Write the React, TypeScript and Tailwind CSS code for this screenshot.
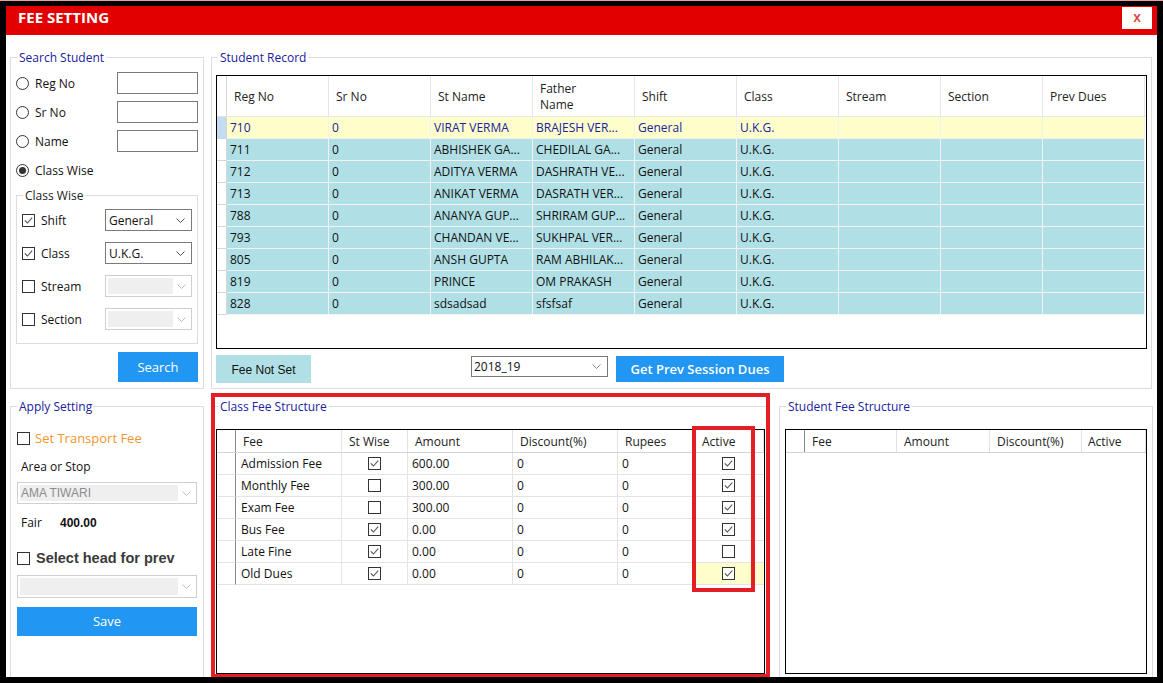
import React from 'react';

const navy = 'text-[#2020a0]';

function Check({ on }: { on?: boolean }) {
  return (
    <span className="inline-flex w-[13px] h-[13px] shrink-0 border border-[#333] bg-white items-center justify-center">
      {on && (
        <svg width="11" height="11" viewBox="0 0 11 11">
          <path d="M1.8 5.4 L4.4 8 L9.2 2.6" fill="none" stroke="#555" strokeWidth="1.1" />
        </svg>
      )}
    </span>
  );
}

function Radio({ on }: { on?: boolean }) {
  return (
    <span className="inline-flex w-[13px] h-[13px] shrink-0 rounded-full border border-[#333] bg-white items-center justify-center">
      {on && <span className="w-[7px] h-[7px] rounded-full bg-[#333]" />}
    </span>
  );
}

function Chevron({ color = '#555' }: { color?: string }) {
  return (
    <svg width="9" height="5" viewBox="0 0 9 5" className="shrink-0">
      <path d="M0.5 0.5 L4.5 4.5 L8.5 0.5" fill="none" stroke={color} />
    </svg>
  );
}

function Combo({ value, className = '' }: { value: string; className?: string }) {
  return (
    <div className={`flex items-center justify-between border border-[#7a7a7a] bg-white pl-[3px] pr-[6px] text-[12px] text-[#111] ${className}`}>
      <span className="pt-[1px]">{value}</span>
      <Chevron />
    </div>
  );
}

function DisabledCombo({ value = '', className = '' }: { value?: string; className?: string }) {
  return (
    <div className={`flex items-stretch border border-[#cfcfcf] bg-white p-[2px] ${className}`}>
      <div className="flex-1 bg-[#efefef] flex items-center pl-[1px] text-[12px] text-[#8c8c8c] font-['Liberation_Sans',Arial,sans-serif]">
        {value}
      </div>
      <div className="w-[16px] flex items-center justify-center">
        <Chevron color="#bdbdbd" />
      </div>
    </div>
  );
}

// group box: the fieldset has no padding so the legend always sits 8px in
function Group({
  title,
  className = '',
  bodyClass = '',
  titleClass = navy,
  children,
}: {
  title: string;
  className?: string;
  bodyClass?: string;
  titleClass?: string;
  children?: React.ReactNode;
}) {
  return (
    <fieldset className={`border border-[#dcdcdc] min-w-0 ${className}`}>
      <legend className={`ml-[6px] px-[2px] text-[12px] leading-[16px] pt-[1px] ${titleClass}`}>{title}</legend>
      <div className={`flex flex-col ${bodyClass}`}>{children}</div>
    </fieldset>
  );
}

const students = [
  ['710', '0', 'VIRAT VERMA', 'BRAJESH VER...'],
  ['711', '0', 'ABHISHEK GA...', 'CHEDILAL GA...'],
  ['712', '0', 'ADITYA VERMA', 'DASHRATH VE...'],
  ['713', '0', 'ANIKAT VERMA', 'DASRATH VER...'],
  ['788', '0', 'ANANYA GUP...', 'SHRIRAM GUP...'],
  ['793', '0', 'CHANDAN VE...', 'SUKHPAL VER...'],
  ['805', '0', 'ANSH GUPTA', 'RAM ABHILAK...'],
  ['819', '0', 'PRINCE', 'OM PRAKASH'],
  ['828', '0', 'sdsadsad', 'sfsfsaf'],
];

const recordCols = ['Reg No', 'Sr No', 'St Name', 'Father\nName', 'Shift', 'Class', 'Stream', 'Section', 'Prev Dues'];

function StudentTable() {
  return (
    <div className="w-[931px] h-[274px] border border-black bg-white mt-[9px] overflow-hidden">
      <div className="flex h-[41px] border-b border-[#e6e6e6]">
        <div className="w-[10px] border-r border-[#d6d6d6]" />
        {recordCols.map((c) => (
          <div
            key={c}
            className="w-[102px] border-r border-[#e6e6e6] flex items-center pl-[7px] pt-[2px] text-[12px] leading-[16px] text-[#222] whitespace-pre-line"
          >
            {c}
          </div>
        ))}
      </div>
      {students.map((r, i) => {
        const sel = i === 0;
        const cells = [...r, 'General', 'U.K.G.', '', '', ''];
        return (
          <div key={r[0]} className="flex h-[22px]">
            <div
              className={`w-[10px] border-r border-b border-[#d6d6d6] ${sel ? 'bg-[#c4dcf2]' : 'bg-white'}`}
            />
            {cells.map((c, j) => (
              <div
                key={j}
                className={`w-[102px] border-r border-b border-[#f2f2f2] flex items-center pl-[3px] pt-[1px] text-[12px] whitespace-nowrap overflow-hidden ${
                  sel ? 'bg-[#ffffcc] text-[#2020a0]' : 'bg-[#b0e0e6] text-[#111]'
                }`}
              >
                {c}
              </div>
            ))}
          </div>
        );
      })}
    </div>
  );
}

const feeRows: [string, boolean, string, string, string, boolean][] = [
  ['Admission Fee', true, '600.00', '0', '0', true],
  ['Monthly Fee', false, '300.00', '0', '0', true],
  ['Exam Fee', false, '300.00', '0', '0', true],
  ['Bus Fee', true, '0.00', '0', '0', true],
  ['Late Fine', true, '0.00', '0', '0', false],
  ['Old Dues', true, '0.00', '0', '0', true],
];

function HeaderCell({ w, label, pl = 'pl-[7px]' }: { w: string; label: string; pl?: string }) {
  return (
    <div className={`${w} border-r border-[#e2e2e2] flex items-center ${pl} pt-[1px] text-[12px] text-[#222] whitespace-nowrap`}>
      {label}
    </div>
  );
}

function ClassFeeTable() {
  return (
    <div className="w-[549px] h-[245px] border border-black bg-white mt-[14px] overflow-hidden">
      <div className="flex h-[23px] border-b border-[#d4d4d4]">
        <div className="w-[19px] border-r border-[#8a8a8a]" />
        <HeaderCell w="w-[106px]" label="Fee" />
        <HeaderCell w="w-[66px]" label="St Wise" />
        <HeaderCell w="w-[105px]" label="Amount" />
        <HeaderCell w="w-[105px]" label="Discount(%)" />
        <HeaderCell w="w-[75px]" label="Rupees" />
        <HeaderCell w="w-[71px]" label="Active" pl="pl-[9px]" />
      </div>
      {feeRows.map((r, i) => (
        <div key={r[0]} className="flex h-[22px] text-[12px] text-[#111]">
          <div className="w-[19px] border-r border-r-[#8a8a8a] border-b border-b-[#e4e4e4]" />
          <div className="w-[106px] border-r border-b border-[#e4e4e4] flex items-center pl-[5px] pt-[1px]">{r[0]}</div>
          <div className="w-[66px] border-r border-b border-[#e4e4e4] flex items-center justify-center">
            <Check on={r[1]} />
          </div>
          <div className="w-[105px] border-r border-b border-[#e4e4e4] flex items-center pl-[4px] pt-[1px]">{r[2]}</div>
          <div className="w-[105px] border-r border-b border-[#e4e4e4] flex items-center pl-[4px] pt-[1px]">{r[3]}</div>
          <div className="w-[75px] border-r border-b border-[#e4e4e4] flex items-center pl-[4px] pt-[1px]">{r[4]}</div>
          <div
            className={`w-[71px] border-b border-[#e4e4e4] flex items-center justify-center ${
              i === feeRows.length - 1 ? 'bg-[#ffffcc]' : ''
            }`}
          >
            <Check on={r[5]} />
          </div>
        </div>
      ))}
    </div>
  );
}

function StudentFeeTable() {
  return (
    <div className="w-[362px] h-[245px] border border-black bg-white mt-[14px] overflow-hidden">
      <div className="flex h-[23px] border-b border-[#d4d4d4]">
        <div className="w-[19px] border-r border-[#8a8a8a]" />
        <HeaderCell w="w-[92px]" label="Fee" />
        <HeaderCell w="w-[93px]" label="Amount" />
        <HeaderCell w="w-[92px]" label="Discount(%)" />
        <HeaderCell w="w-[64px]" label="Active" pl="pl-[6px]" />
      </div>
    </div>
  );
}

function BlueButton({ children, className = '' }: { children: React.ReactNode; className?: string }) {
  return (
    <div className={`bg-[#2196f3] text-white flex items-center justify-center text-[13px] ${className}`}>
      {children}
    </div>
  );
}

export default function App() {
  return (
    <div className="w-[1163px] h-[683px] bg-black border-t border-[#e9a0a0] pt-[5px] px-[6px] pb-[6px] flex flex-col font-['Open_Sans','Noto_Sans',sans-serif]">
      {/* title bar */}
      <div className="h-[29px] shrink-0 bg-[#e20000] flex items-start justify-between pl-[12px] pr-[5px]">
        <span className="text-white font-bold text-[15px] leading-[23px]">FEE SETTING</span>
        <div className="mt-[1px] w-[30px] h-[22px] bg-white flex items-center justify-center text-[#e0403a] text-[14px] font-semibold leading-none pb-[2px]">
          x
        </div>
      </div>

      {/* body */}
      <div className="flex-1 bg-white overflow-hidden flex flex-col pl-[4px] pt-[14px] text-[#111]">
        <div className="flex gap-[7px] h-[340px] shrink-0">
          {/* search student */}
          <Group title="Search Student" className="w-[194px] h-full" bodyClass="px-[5px]">
            <div className="flex flex-col gap-[7px] mt-[6px] text-[12px]">
              {['Reg No', 'Sr No', 'Name'].map((l) => (
                <div key={l} className="flex items-center h-[22px]">
                  <Radio />
                  <span className="ml-[6px] flex-1 pt-[2px]">{l}</span>
                  <div className="w-[81px] h-[22px] border border-[#7a7a7a] bg-white" />
                </div>
              ))}
              <div className="flex items-center h-[22px]">
                <Radio on />
                <span className="ml-[6px] pt-[2px]">Class Wise</span>
              </div>
            </div>
            <Group title="Class Wise" titleClass="text-[#222]" className="mt-[6px] h-[157px]" bodyClass="px-[5px]">
              <div className="flex flex-col gap-[11px] mt-[5px] text-[12px]">
                <div className="flex items-center h-[22px]">
                  <Check on />
                  <span className="ml-[6px] flex-1 pt-[2px]">Shift</span>
                  <Combo value="General" className="w-[87px] h-[22px]" />
                </div>
                <div className="flex items-center h-[22px]">
                  <Check on />
                  <span className="ml-[6px] flex-1 pt-[2px]">Class</span>
                  <Combo value="U.K.G." className="w-[87px] h-[22px]" />
                </div>
                <div className="flex items-center h-[22px]">
                  <Check />
                  <span className="ml-[6px] flex-1 pt-[2px]">Stream</span>
                  <DisabledCombo className="w-[87px] h-[22px]" />
                </div>
                <div className="flex items-center h-[22px]">
                  <Check />
                  <span className="ml-[6px] flex-1 pt-[2px]">Section</span>
                  <DisabledCombo className="w-[87px] h-[22px]" />
                </div>
              </div>
            </Group>
            <BlueButton className="self-end mt-[8px] w-[80px] h-[30px] pt-[2px]">Search</BlueButton>
          </Group>

          {/* student record */}
          <Group title="Student Record" className="w-[941px] h-full" bodyClass="px-[4px]">
            <StudentTable />
            <div className="flex items-start mt-[6px]">
              <div className="w-[95px] h-[28px] bg-[#b0e0e6] flex items-center justify-center pt-[1px] text-[12px] text-[#111] font-['Liberation_Sans',Arial,sans-serif]">
                Fee Not Set
              </div>
              <div className="ml-[160px] mt-[1px] w-[137px] h-[21px] border border-[#7a7a7a] bg-white flex items-center justify-between pl-[2px] pr-[6px] text-[12px]">
                <span>2018_19</span>
                <Chevron color="#888" />
              </div>
              <BlueButton className="ml-[8px] mt-[1px] w-[168px] h-[26px] pt-[2px] font-semibold">Get Prev Session Dues</BlueButton>
            </div>
          </Group>
        </div>

        <div className="flex mt-[9px] h-[290px] shrink-0">
          {/* apply setting */}
          <Group title="Apply Setting" className="w-[194px] h-full" bodyClass="pl-[6px] pr-[5px] text-[12px]">
            <div className="flex items-center h-[16px] mt-[15px]">
              <Check />
              <span className="ml-[5px] pt-[1px] text-[#f0962e] text-[13px]">Set Transport Fee</span>
            </div>
            <div className="h-[16px] mt-[12px] pl-[4px] pt-[1px] flex items-center">Area or Stop</div>
            <DisabledCombo value="AMA TIWARI" className="mt-[8px] w-[180px] h-[22px]" />
            <div className="h-[16px] mt-[10px] pl-[4px] pt-[1px] flex items-center">
              <span className="w-[39px]">Fair</span>
              <span className="font-bold font-['Liberation_Sans',Arial,sans-serif]">400.00</span>
            </div>
            <div className="flex items-center h-[16px] mt-[20px]">
              <Check />
              <span className="ml-[6px] pt-[1px] font-bold text-[14.5px] text-[#3a3a3a] font-['Liberation_Sans',Arial,sans-serif]">
                Select head for prev
              </span>
            </div>
            <DisabledCombo className="mt-[9px] w-[180px] h-[23px]" />
            <BlueButton className="mt-[9px] w-[180px] h-[29px] pt-[1px]">Save</BlueButton>
          </Group>

          {/* class fee structure, with the red markup boxes drawn over it */}
          <div className="relative ml-[7px] w-[559px] h-full">
            <Group title="Class Fee Structure" className="w-full h-full" bodyClass="pl-[4px]">
              <ClassFeeTable />
            </Group>
            <div className="absolute left-0 top-[-5px] w-[559px] h-[285px] border-[4px] border-[#e31e24] pointer-events-none" />
            <div className="absolute left-[481px] top-[28px] w-[63px] h-[166px] border-[4px] border-[#e31e24] pointer-events-none" />
          </div>

          {/* student fee structure */}
          <Group title="Student Fee Structure" className="ml-[9px] w-[374px] h-full" bodyClass="pl-[5px]">
            <StudentFeeTable />
          </Group>
        </div>
      </div>
    </div>
  );
}
